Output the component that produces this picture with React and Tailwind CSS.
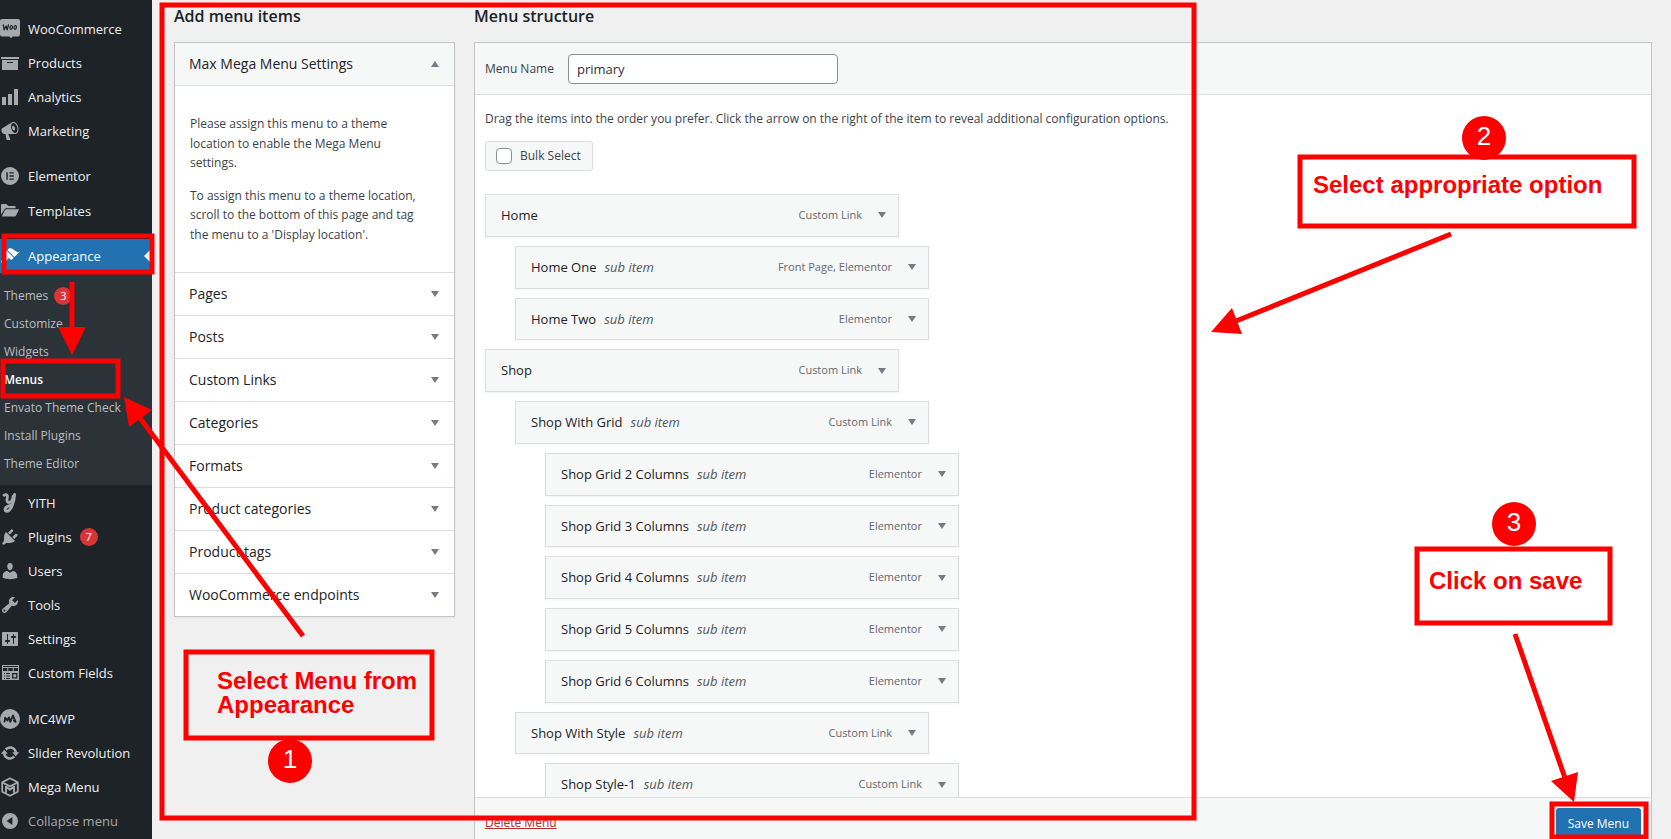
import React from "react";

const PATHS = {
  archive: "M19 4v2H1V4h18zM2 7h16v10H2V7zm11 3V9H7v1h6z",
  bars: "M18 18V2h-4v16h4zm-6 0V7H8v11h4zm-6 0v-8H2v8h4z",
  megaphone:
    "M18.15 5.94c.46 1.62.38 3.22-.02 4.48-.42 1.28-1.26 2.18-2.3 2.48-.16.06-.26.06-.4.06-.06.02-.12.02-.18.02-.06.02-.14.02-.22.02h-6.8l2.22 5.5c.02.14-.06.26-.14.34-.08.1-.24.16-.34.16H6.95c-.1 0-.26-.06-.34-.16-.08-.08-.16-.2-.14-.34l-1-5.5H4.25l-.02-.02c-.5.06-1.08-.18-1.54-.62s-.88-1.08-1.06-1.88c-.24-.8-.2-1.56-.02-2.2.18-.62.58-1.08 1.06-1.3l.02-.02 9-5.4c.1-.06.18-.1.24-.16.06-.04.14-.08.24-.12.16-.08.28-.12.5-.18 1.04-.3 2.24.1 3.22.98s1.84 2.24 2.26 3.86zm-2.58 5.98h-.02c.4-.1.74-.34 1.04-.7.58-.7.86-1.76.86-3.04 0-.64-.1-1.3-.28-1.98-.34-1.36-1.02-2.5-1.78-3.24s-1.68-1.1-2.46-.88c-.82.22-1.4.96-1.7 2-.32 1.04-.28 2.36.06 3.72.38 1.36 1 2.5 1.8 3.24.78.74 1.62 1.1 2.48.88zm-2.54-7.08c.22-.04.42-.02.62.04.38.16.76.48 1.02 1s.42 1.2.42 1.78c0 .3-.04.56-.12.8-.18.48-.44.84-.86.94-.34.1-.8-.06-1.14-.4s-.64-.86-.78-1.5c-.18-.62-.12-1.24.02-1.72s.48-.84.82-.94z",
  elementor:
    "M10 1a9 9 0 1 0 0 18 9 9 0 0 0 0-18zM6.4 6.2h1.4v7.6H6.4V6.2zm3 0h4.4v1.4H9.4V6.2zm0 3.1h4.4v1.4H9.4V9.3zm0 3.1h4.4v1.4H9.4v-1.4z",
  folder:
    "M1 4.2c0-.7.5-1.2 1.2-1.2h4.2l1.8 2h6.400c.6 0 1 .4 1 1v1.200H6c-.6 0-1 .3-1.300.8L1 13.800V4.200zM6 8.200h13.200l-3.300 6.600c-.2.4-.5.6-.9.6H1.800L5.100 8.800c.2-.4.5-.6.9-.6z",
  brush:
    "M14.48 11.06L7.41 3.99l1.5-1.5c.5-.56 2.3-.47 3.51.32 1.21.8 1.43 1.28 2.91 2.1 1.18.64 2.45 1.26 4.45.85zm-.71.71L6.7 4.7 4.93 6.47c-.39.39-.39 1.02 0 1.41l1.06 1.06c.39.39.39 1.03 0 1.42-.6.6-1.43 1.11-2.21 1.69-.35.26-.7.53-1.01.84C1.43 14.23.4 16.08 1.4 17.07c.99 1 2.84-.03 4.18-1.36.31-.31.58-.66.85-1.02.57-.78 1.08-1.61 1.69-2.21.39-.39 1.02-.39 1.41 0l1.06 1.06c.39.39 1.02.39 1.41 0z",
  plug: "M13.11 4.36L9.87 7.6 8 5.73l3.24-3.24c.35-.34 1.05-.2 1.56.32.52.51.66 1.21.31 1.55zm-8 1.77l.91-1.12 9.01 9.01-1.19.84c-.71.71-2.63 1.16-3.82 1.16H6.14L4.9 17.26c-.59.59-1.54.59-2.12 0-.59-.58-.59-1.53 0-2.12l1.24-1.24v-3.88c0-1.13.4-3.19 1.09-3.89zm7.26 3.97l3.24-3.24c.34-.35 1.04-.21 1.55.31.52.51.66 1.21.31 1.55l-3.24 3.25z",
  user: "M10 9.25c-2.27 0-2.73-3.44-2.73-3.44C7 4.02 7.82 2 9.97 2c2.16 0 2.98 2.02 2.71 3.81 0 0-.41 3.44-2.68 3.44zm0 2.57L12.72 10c2.39 0 4.52 2.33 4.52 4.53v2.49s-3.65 1.13-7.24 1.13c-3.65 0-7.24-1.13-7.24-1.13v-2.49c0-2.25 1.94-4.48 4.47-4.48z",
  wrench:
    "M16.68 9.77c-1.34 1.34-3.3 1.67-4.95.99l-5.41 6.52c-.99.99-2.59.99-3.58 0s-.99-2.59 0-3.57l6.52-5.42c-.68-1.65-.35-3.61.99-4.95 1.28-1.28 3.12-1.62 4.72-1.06l-2.89 2.89 2.82 2.82 2.86-2.87c.53 1.58.18 3.39-1.08 4.65zM3.81 16.21c.4.39 1.04.39 1.43 0 .4-.4.4-1.04 0-1.43-.39-.4-1.03-.4-1.43 0-.39.39-.39 1.03 0 1.43z",
  sliders:
    "M18 16V4c0-.55-.45-1-1-1H3c-.55 0-1 .45-1 1v12c0 .55.45 1 1 1h14c.55 0 1-.45 1-1zM8 11h1c.55 0 1 .45 1 1s-.45 1-1 1H8v1.5c0 .28-.22.5-.5.5s-.5-.22-.5-.5V13H6c-.55 0-1-.45-1-1s.45-1 1-1h1V5.5c0-.28.22-.5.5-.5s.5.22.5.5V11zm5-2h-1c-.55 0-1-.45-1-1s.45-1 1-1h1V5.5c0-.28.22-.5.5-.5s.5.22.5.5V7h1c.55 0 1 .45 1 1s-.45 1-1 1h-1v5.5c0 .28-.22.5-.5.5s-.5-.22-.5-.5V9z",
  fields:
    "M2 2h17v15H2V2zm1 1v1h15V3H3zm0 2v3h4.300V5H3zm5.300 0v3h4.400V5H8.300zm5.400 0v3H18V5h-4.300zM4 10v1h1v-1H4zm2 0v1h4v-1H6zm-2 2.500v1h1v-1H4zm2 0v1h4v-1H6zM4 15v1h1v-1H4zm2 0v1h4v-1H6zm6-5v5.500h5.500V10H12zm1.300 1.300h2.900v2.900h-2.900v-2.900z",
  cycle:
    "M10.2 3.28c3.53 0 6.43 2.61 6.92 6h2.08l-3.5 4-3.5-4h2.32c-.45-1.97-2.21-3.45-4.32-3.45-1.45 0-2.73.71-3.54 1.78L4.95 5.66C6.23 4.2 8.11 3.28 10.2 3.28zm-.4 13.44c-3.52 0-6.43-2.61-6.92-6H.8l3.5-4c1.17 1.33 2.33 2.67 3.5 4H5.48c.45 1.97 2.21 3.45 4.32 3.45 1.45 0 2.73-.71 3.54-1.78l1.71 1.95c-1.28 1.46-3.15 2.38-5.25 2.38z",
  collapse: "M10 2a8 8 0 1 0 0 16 8 8 0 0 0 0-16zM12.4 6v8L6.6 10z",
};

function Icon({ name }) {
  const cls = "h-5 w-5 shrink-0";
  if (name === "woo")
    return (
      <svg viewBox="0 0 20 20" className={cls} aria-hidden="true">
        <path fill="currentColor" d="M2 0h16a2 2 0 0 1 2 2v13.500a2 2 0 0 1-2 2h-5.500l-1.300 1.700-2-1.700H2a2 2 0 0 1-2-2V2a2 2 0 0 1 2-2z" />
        <path
          fill="none"
          stroke="#1d2327"
          strokeWidth="1.300"
          strokeLinejoin="round"
          strokeLinecap="round"
          d="M3.300 5.800l.9 5L6.100 7l1.100 3.800 1.300-5"
        />
        <ellipse cx="11.200" cy="8.400" rx="1.200" ry="1.900" fill="none" stroke="#1d2327" strokeWidth="1.200" transform="rotate(12 11.200 8.400)" />
        <ellipse cx="15.200" cy="8.400" rx="1.200" ry="1.900" fill="none" stroke="#1d2327" strokeWidth="1.200" transform="rotate(12 15.200 8.400)" />
      </svg>
    );
  if (name === "yith")
    return (
      <svg viewBox="0 0 20 20" className={cls} aria-hidden="true" fill="none" stroke="currentColor" strokeLinecap="round" strokeLinejoin="round">
        <path strokeWidth="2.800" d="M4 2.200c3-1.600 3.800.4 3.200 3-.7 3 .2 4.800 2.500 4.200 2-.6 3-2.800 3.400-6" />
        <path strokeWidth="3" d="M14.600 1.500c-.3 4.200-1.200 8.500-2.900 12-1.500 3-3.200 5-5.100 4.700-2.200-.4-1.900-3.200.6-4.500 1.500-.8 3.100-1.300 5-2" />
      </svg>
    );
  if (name === "mc4wp")
    return (
      <svg viewBox="0 0 20 20" className={cls} aria-hidden="true">
        <circle cx="10" cy="10" r="10" fill="currentColor" />
        <path
          fill="none"
          stroke="#1d2327"
          strokeWidth="1.900"
          strokeLinejoin="round"
          strokeLinecap="round"
          d="M4.500 12.600l.7-4 2.200 2.800L9 8.400l1.200 4.400L13 6.600l2.600 6.300-1.700-1.400"
        />
      </svg>
    );
  if (name === "mega")
    return (
      <svg viewBox="0 0 20 20" className={cls} aria-hidden="true" fill="none" stroke="currentColor" strokeLinejoin="round">
        <path strokeWidth="1.800" d="M10 1.200l7.800 4v9.600l-7.800 4-7.800-4V5.200z" />
        <path strokeWidth="1.800" d="M2.500 5.500L10 9.400l7.500-3.900" />
        <path strokeWidth="1.900" d="M6 15.800V9.600l4 3.200 4-3.200v6.200" />
      </svg>
    );
  return (
    <svg viewBox="0 0 20 20" className={cls} aria-hidden="true">
      <path fill="currentColor" fillRule="evenodd" d={PATHS[name]} />
    </svg>
  );
}

function Triangle({ up = false }) {
  return (
    <svg viewBox="0 0 8 6" className="h-[6px] w-2 shrink-0 text-[#787c82]" aria-hidden="true">
      <path fill="currentColor" d={up ? "M0 6L4 0l4 6z" : "M0 0h8L4 6z"} />
    </svg>
  );
}

function Badge({ children }) {
  return (
    <span className="flex h-[18px] w-[18px] items-center justify-center rounded-full bg-[#d63638] text-[11px] text-white">
      {children}
    </span>
  );
}

function NavItem({ icon, label, badge, tall = false }) {
  return (
    <li>
      <a href="#" className={`flex items-center gap-2 text-[#f0f0f1] ${tall ? "h-[35px]" : "h-[34px]"}`}>
        <span className="flex text-[#a7aaad]">
          <Icon name={icon} />
        </span>
        <span className="pt-0.5">{label}</span>
        {badge && <Badge>{badge}</Badge>}
      </a>
    </li>
  );
}

const SUBMENU = ["Themes", "Customize", "Widgets", "Menus", "Envato Theme Check", "Install Plugins", "Theme Editor"];

function Sidebar() {
  return (
    <nav aria-label="Main menu" className="w-[152px] shrink-0 bg-[#1d2327] pt-3 text-[13px]">
      <ul>
        <NavItem icon="woo" label="WooCommerce" />
        <NavItem icon="archive" label="Products" />
        <NavItem icon="bars" label="Analytics" />
        <NavItem icon="megaphone" label="Marketing" />
      </ul>
      <ul className="mt-[11px]">
        <NavItem icon="elementor" label="Elementor" />
        <NavItem icon="folder" label="Templates" tall />
      </ul>
      <ul className="mt-[11px]">
        <li>
          <a href="#" className="flex h-[34px] items-center gap-2 bg-[#2271b1] text-white">
            <Icon name="brush" />
            <span className="flex-1 pt-0.5">Appearance</span>
            <svg viewBox="0 0 8 16" className="h-4 w-2" aria-hidden="true">
              <path fill="#f0f0f1" d="M8 0v16L0 8z" />
            </svg>
          </a>
          <ul className="bg-[#2c3338] pt-[9px] pb-[7px] text-xs text-[#b9bec3]">
            {SUBMENU.map((label) => (
              <li key={label}>
                <a
                  href="#"
                  className={`flex h-7 items-center gap-[6px] pl-1 whitespace-nowrap ${
                    label === "Menus" ? "font-semibold text-white" : ""
                  }`}
                >
                  {label}
                  {label === "Themes" && <Badge>3</Badge>}
                </a>
              </li>
            ))}
          </ul>
        </li>
        <NavItem icon="yith" label="YITH" tall />
        <NavItem icon="plug" label="Plugins" badge="7" />
        <NavItem icon="user" label="Users" />
        <NavItem icon="wrench" label="Tools" />
        <NavItem icon="sliders" label="Settings" />
        <NavItem icon="fields" label="Custom Fields" />
      </ul>
      <ul className="mt-[11px]">
        <NavItem icon="mc4wp" label="MC4WP" tall />
        <NavItem icon="cycle" label="Slider Revolution" />
        <NavItem icon="mega" label="Mega Menu" />
        <li>
          <button type="button" className="flex h-[34px] items-center gap-2 text-[#a7aaad]">
            <Icon name="collapse" />
            <span className="pt-0.5">Collapse menu</span>
          </button>
        </li>
      </ul>
    </nav>
  );
}

const SECTIONS = [
  "Pages",
  "Posts",
  "Custom Links",
  "Categories",
  "Formats",
  "Product categories",
  "Product tags",
  "WooCommerce endpoints",
];

function AddItems() {
  return (
    <section className="w-[281px] shrink-0">
      <h2 className="mb-[14px] h-6 text-base leading-6 font-semibold text-[#1d2327]">Add menu items</h2>
      <div className="border border-[#c3c4c7] bg-white shadow-xs">
        <h3>
          <button
            type="button"
            aria-expanded="true"
            className="flex h-[43px] w-full items-center justify-between border-b border-[#dcdcde] bg-[#f6f7f7] pr-[15px] pl-[14px] text-sm font-medium text-[#1d2327]"
          >
            Max Mega Menu Settings
            <Triangle up />
          </button>
        </h3>
        <div className="flex flex-col gap-[13px] py-7 pr-6 pl-[15px] text-xs leading-relaxed">
          <p>Please assign this menu to a theme location to enable the Mega Menu settings.</p>
          <p>To assign this menu to a theme location, scroll to the bottom of this page and tag the menu to a &#39;Display location&#39;.</p>
        </div>
        {SECTIONS.map((title) => (
          <h3 key={title}>
            <button
              type="button"
              aria-expanded="false"
              className="flex h-[43px] w-full items-center justify-between border-t border-[#dcdcde] pr-[15px] pl-[14px] text-sm font-medium text-[#1d2327]"
            >
              {title}
              <Triangle />
            </button>
          </h3>
        ))}
      </div>
    </section>
  );
}

const ITEMS = [
  { title: "Home", type: "Custom Link", depth: 0 },
  { title: "Home One", type: "Front Page, Elementor", depth: 1 },
  { title: "Home Two", type: "Elementor", depth: 1 },
  { title: "Shop", type: "Custom Link", depth: 0 },
  { title: "Shop With Grid", type: "Custom Link", depth: 1 },
  { title: "Shop Grid 2 Columns", type: "Elementor", depth: 2 },
  { title: "Shop Grid 3 Columns", type: "Elementor", depth: 2 },
  { title: "Shop Grid 4 Columns", type: "Elementor", depth: 2 },
  { title: "Shop Grid 5 Columns", type: "Elementor", depth: 2 },
  { title: "Shop Grid 6 Columns", type: "Elementor", depth: 2 },
  { title: "Shop With Style", type: "Custom Link", depth: 1 },
  { title: "Shop Style-1", type: "Custom Link", depth: 2 },
];

const INDENT = ["", "ml-[30px]", "ml-[60px]"];

function MenuItem({ title, type, depth }) {
  return (
    <li
      className={`flex w-[414px] items-center border border-[#dcdcde] bg-[#f6f7f7] py-[9px] pr-3 pl-[15px] shadow-xs ${INDENT[depth]}`}
    >
      <div className="flex-1 text-sm leading-relaxed">
        <span className="text-[13px] leading-5 font-medium text-[#1d2327]">{title}</span>
        {depth > 0 && <em className="ml-2 text-[13px] leading-5 text-[#50575e]">sub item</em>}
      </div>
      <span className="mr-4 text-[11px] text-[#646970]">{type}</span>
      <button type="button" aria-label={`Edit ${title}`} className="flex">
        <Triangle />
      </button>
    </li>
  );
}

function Structure() {
  return (
    <section className="flex min-w-0 flex-1 flex-col">
      <h2 className="mb-[14px] h-6 shrink-0 text-base leading-6 font-semibold text-[#1d2327]">Menu structure</h2>
      <div className="flex min-h-0 flex-1 flex-col border-x border-t border-[#c3c4c7] bg-white">
        <header className="flex shrink-0 items-center gap-[14px] border-b border-[#dcdcde] bg-[#f6f7f7] px-[10px] pt-[11px] pb-[10px] text-xs">
          <label htmlFor="menu-name">Menu Name</label>
          <input
            id="menu-name"
            type="text"
            defaultValue="primary"
            className="h-[30px] w-[270px] rounded border border-[#8c8f94] bg-white px-2 text-[13px] text-[#2c3338]"
          />
        </header>
        <div className="min-h-0 flex-1 overflow-hidden px-[10px] pt-[14px]">
          <p className="text-xs leading-5">
            Drag the items into the order you prefer. Click the arrow on the right of the item to reveal additional configuration options.
          </p>
          <label className="mt-3 flex h-[30px] w-[108px] items-center gap-2 rounded-[3px] border border-[#dcdcde] bg-[#f6f7f7] pl-[10px] text-xs">
            <input type="checkbox" className="h-4 w-4 appearance-none rounded border border-[#8c8f94] bg-white" />
            Bulk Select
          </label>
          <ul className="mt-[23px] flex flex-col gap-[9px]">
            {ITEMS.map((item) => (
              <MenuItem key={item.title} {...item} />
            ))}
          </ul>
        </div>
        <footer className="flex h-[42px] shrink-0 items-start justify-between border-t border-[#dcdcde] bg-[#f6f7f7] px-[10px] pt-[10px]">
          <a href="#" className="text-xs leading-[30px] text-[#b32d2e] underline">
            Delete Menu
          </a>
          <button type="button" className="h-[31px] rounded-[3px] bg-[#2271b1] px-3 text-xs text-white">
            Save Menu
          </button>
        </footer>
      </div>
    </section>
  );
}

const BOXES = [
  [162, 5, 1032, 813],
  [4, 236, 148, 36],
  [3, 361, 115, 35],
  [186, 652, 246, 86],
  [1300, 157, 334, 69],
  [1417, 549, 193, 74],
  [1552, 804, 94, 33],
];

const ARROWS = [
  { line: "M72 282V330", head: "58,327 86,327 72,355" },
  { line: "M303 636L140 418", head: "124,397 152,410 129,427" },
  { line: "M1451 234L1236 321", head: "1211,332 1232,308 1242,334" },
  { line: "M1515 634L1565 778", head: "1574,802 1551,781 1578,772" },
];

function Annotations() {
  const digit = "absolute flex h-11 w-11 items-center justify-center rounded-full bg-[#ff0000] pb-1 text-[26px] text-white";
  const note = "absolute text-2xl leading-6 font-bold whitespace-pre text-[#ff0000]";
  return (
    <div className="pointer-events-none absolute inset-0 overflow-hidden font-['Liberation_Sans',Arial,sans-serif]">
      <svg className="absolute top-0 left-0 h-[839px] w-[1671px]" viewBox="0 0 1671 839" aria-hidden="true">
        {BOXES.map(([x, y, w, h]) => (
          <rect key={`${x}-${y}`} x={x} y={y} width={w} height={h} fill="none" stroke="#ff0000" strokeWidth="5" />
        ))}
        {ARROWS.map(({ line, head }) => (
          <g key={line}>
            <path d={line} stroke="#ff0000" strokeWidth="5" />
            <polygon points={head} fill="#ff0000" />
          </g>
        ))}
      </svg>
      <p className={`${note} top-[669px] left-[217px]`}>{"Select Menu from\nAppearance"}</p>
      <p className={`${note} top-[173px] left-[1313px]`}>Select appropriate option</p>
      <p className={`${note} top-[569px] left-[1429px]`}>Click on save</p>
      <span className={`${digit} top-[739px] left-[268px]`}>1</span>
      <span className={`${digit} top-[116px] left-[1462px]`}>2</span>
      <span className={`${digit} top-[502px] left-[1492px]`}>3</span>
    </div>
  );
}

export default function App() {
  return (
    <div className="relative flex h-screen overflow-hidden bg-[#f0f0f1] font-['Segoe_UI','Open_Sans',sans-serif] text-[#3c434a]">
      <Sidebar />
      <main className="flex min-w-0 flex-1 gap-[19px] pt-1 pr-[19px] pl-[22px]">
        <AddItems />
        <Structure />
      </main>
      <Annotations />
    </div>
  );
}
